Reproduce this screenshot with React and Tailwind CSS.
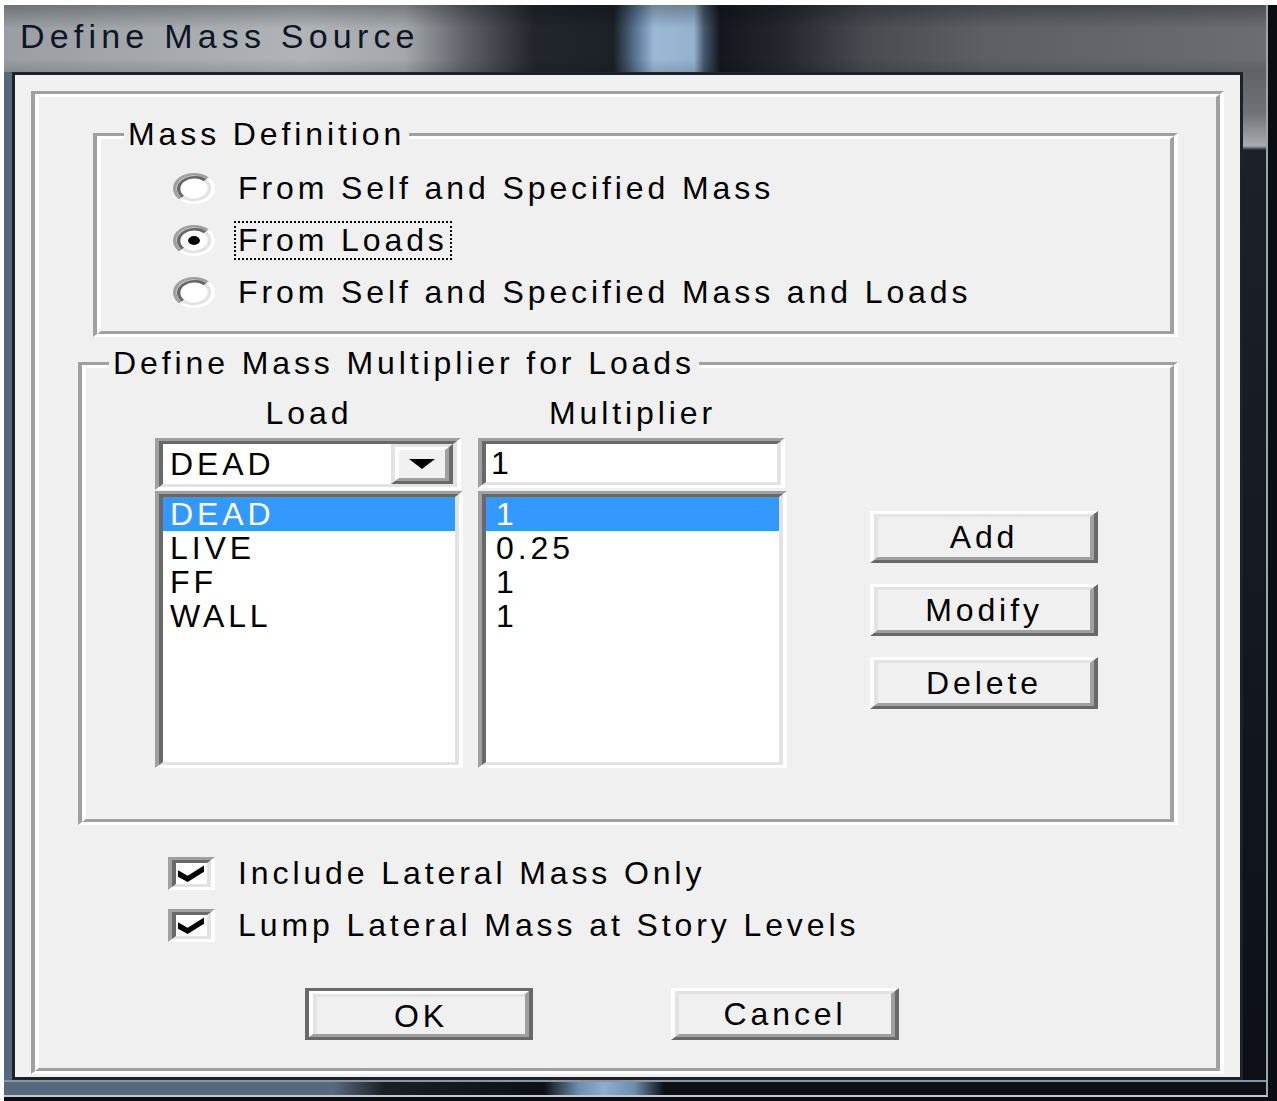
import React from "react"

// classic 3D edge styles
const sunkenOuter =
  "border-t-[3px] border-l-4 border-r-4 border-b-[3px] border-t-[#a0a0a0] border-l-[#a0a0a0] border-r-white border-b-white"
const sunkenInner =
  "border-t-[3px] border-l-4 border-r-4 border-b-[3px] border-t-[#696969] border-l-[#696969] border-r-[#e3e3e3] border-b-[#e3e3e3]"
const etchedOuter =
  "border-t-[3px] border-l-4 border-r-4 border-b-[3px] border-t-[#a0a0a0] border-l-[#a0a0a0] border-r-white border-b-white"
const etchedInner =
  "border-t-[3px] border-l-4 border-r-4 border-b-[3px] border-t-white border-l-white border-r-[#a0a0a0] border-b-[#a0a0a0]"

function Sunken({ className = "", inner = "", children }) {
  return (
    <div className={`${sunkenOuter} ${className}`}>
      <div className={`${sunkenInner} h-full bg-white ${inner}`}>{children}</div>
    </div>
  )
}

function Etched({ className = "", label, children }) {
  return (
    <div className={`${etchedOuter} relative ${className}`}>
      <div className={`${etchedInner} h-full`}>{children}</div>
      {label && (
        <span className="absolute -top-[19px] left-[27px] px-[4px] bg-[#f0f0f0] whitespace-nowrap">{label}</span>
      )}
    </div>
  )
}

function Button({ label, className = "" }) {
  return (
    <div className={`border-t-[3px] border-l-4 border-r-4 border-b-[3px] border-t-white border-l-white border-r-[#696969] border-b-[#696969] ${className}`}>
      <div className="h-full border-t-[3px] border-l-4 border-r-4 border-b-[3px] border-t-[#e3e3e3] border-l-[#e3e3e3] border-r-[#a0a0a0] border-b-[#a0a0a0] flex items-center justify-center">
        {label}
      </div>
    </div>
  )
}

function DefaultButton({ label, className = "" }) {
  return (
    <div className={`border-t-[3px] border-l-4 border-r-4 border-b-[3px] border-[#696969] ${className}`}>
      <div className="h-full border-t-[3px] border-l-4 border-r-4 border-b-[3px] border-t-white border-l-white border-r-[#a0a0a0] border-b-[#a0a0a0]">
        <div className="h-full border-t-[3px] border-l-4 border-t-[#e3e3e3] border-l-[#e3e3e3] flex items-center justify-center">
          {label}
        </div>
      </div>
    </div>
  )
}

function Radio({ checked }) {
  return (
    <svg width="42" height="31" viewBox="0 0 12 12" preserveAspectRatio="none" className="shrink-0">
      <circle cx="6" cy="6" r="4.5" fill="#fff" />
      <path d="M2.11 9.89 A5.5 5.5 0 0 1 9.89 2.11" fill="none" stroke="#a0a0a0" strokeWidth="1" />
      <path d="M2.82 9.18 A4.5 4.5 0 0 1 9.18 2.82" fill="none" stroke="#696969" strokeWidth="1" />
      <path d="M9.89 2.11 A5.5 5.5 0 0 1 2.11 9.89" fill="none" stroke="#ffffff" strokeWidth="1" />
      <path d="M9.18 2.82 A4.5 4.5 0 0 1 2.82 9.18" fill="none" stroke="#e3e3e3" strokeWidth="1" />
      {checked && <circle cx="6" cy="6" r="1.7" fill="#000" />}
    </svg>
  )
}

function Check() {
  return (
    <svg width="26" height="17" viewBox="0 0 7 7" preserveAspectRatio="none">
      <polygon points="0,2.2 2.6,4.4 7,0.2 7,2.8 2.6,7 0,4.8" fill="#000" />
    </svg>
  )
}

function RadioRow({ checked, focused, children }) {
  return (
    <div className="flex items-center h-[52px]">
      <Radio checked={checked} />
      <span
        className={`ml-[19px] px-[2px] leading-[35px] border-2 border-dotted whitespace-nowrap ${
          focused ? "border-black" : "border-transparent"
        }`}
      >
        {children}
      </span>
    </div>
  )
}

function CheckRow({ children }) {
  return (
    <div className="flex items-center h-[52px]">
      <Sunken className="w-[47px] h-[33px]" inner="flex items-center justify-center pr-[2px]">
        <Check />
      </Sunken>
      <span className="ml-[23px] whitespace-nowrap">{children}</span>
    </div>
  )
}

const loads = [
  { name: "DEAD", mult: "1" },
  { name: "LIVE", mult: "0.25" },
  { name: "FF", mult: "1" },
  { name: "WALL", mult: "1" },
]

export default function App() {
  return (
    <div className="w-[1277px] h-[1101px] overflow-hidden bg-[#0b0d12] border-t-[5px] border-l-4 border-t-white border-l-white font-['Liberation_Sans',Arial,sans-serif] text-[32px] leading-[34px] tracking-[3.9px] text-black">
      <div className="w-[1264px] h-[1092px] flex flex-col border-r-2 border-b-2 border-r-[#9ea3a8] border-b-[#c4c8cc]">
        {/* title bar */}
        <div className="h-[67px] shrink-0 pl-[16px] pt-[14px] bg-[linear-gradient(to_bottom,rgba(0,0,0,0.28),rgba(0,0,0,0)_35%,rgba(0,0,0,0)_80%,rgba(0,0,0,0.12)),linear-gradient(to_right,#9a9ea2_0px,#b0b4b8_300px,#a4a8ac_400px,#60646a_460px,#22262c_530px,#1c2128_610px,#5a7694_632px,#9cb8d4_650px,#94b2ce_690px,#46586c_700px,#14181e_716px,#24282e_780px,#474b50_860px,#5c6064_980px,#6a6e72_1262px)]">
          <span className="text-[34px] tracking-[5.2px] text-[#0e1626] whitespace-nowrap">Define Mass Source</span>
        </div>

        {/* frame + client */}
        <div className="flex flex-1">
          <div className="w-[8px] bg-[#56687c]" />
          <div className="w-[1231px] border-[3px] border-[#1d2229] bg-[#f0f0f0] pt-[16px] pl-[16px]">
            <Etched className="w-[1193px] h-[983px]">
              <div className="flex flex-col">
                {/* mass definition */}
                <Etched label="Mass Definition" className="ml-[54px] mt-[36px] w-[1085px] h-[204px]">
                  <div className="pl-[72px] pt-[23px]">
                    <RadioRow>From Self and Specified Mass</RadioRow>
                    <RadioRow checked focused>
                      From Loads
                    </RadioRow>
                    <RadioRow>From Self and Specified Mass and Loads</RadioRow>
                  </div>
                </Etched>

                {/* multipliers */}
                <Etched label="Define Mass Multiplier for Loads" className="ml-[39px] mt-[25px] w-[1100px] h-[463px]">
                  <div className="flex pl-[69px] pt-[28px]">
                    <div className="w-[308px] flex flex-col">
                      <div className="text-center">Load</div>
                      <Sunken className="mt-[8px] w-[306px] h-[52px]" inner="flex items-center">
                        <span className="pl-[7px] flex-1">DEAD</span>
                        <div className="w-[62px] h-full border-t-[3px] border-l-4 border-r-4 border-b-[3px] border-t-[#e3e3e3] border-l-[#e3e3e3] border-r-[#696969] border-b-[#696969]">
                          <div className="h-full border-t-[3px] border-l-4 border-r-4 border-b-[3px] border-t-white border-l-white border-r-[#a0a0a0] border-b-[#a0a0a0] bg-[#f0f0f0] flex items-center justify-center">
                            <svg width="26" height="10" viewBox="0 0 26 10">
                              <polygon points="0,0 26,0 13,10" fill="#000" />
                            </svg>
                          </div>
                        </div>
                      </Sunken>
                      <Sunken className="mt-[1px] w-[308px] h-[277px]">
                        {loads.map((l, i) => (
                          <div key={l.name} className={`pl-[7px] h-[34px] ${i === 0 ? "bg-[#3399ff] text-white" : ""}`}>
                            {l.name}
                          </div>
                        ))}
                      </Sunken>
                    </div>

                    <div className="ml-[15px] w-[309px] flex flex-col">
                      <div className="text-center">Multiplier</div>
                      <Sunken className="mt-[8px] w-[307px] h-[50px]" inner="flex items-center">
                        <span className="pl-[5px]">1</span>
                      </Sunken>
                      <Sunken className="mt-[3px] w-[309px] h-[277px]">
                        {loads.map((l, i) => (
                          <div key={l.name} className={`pl-[10px] h-[34px] ${i === 0 ? "bg-[#3399ff] text-white" : ""}`}>
                            {l.mult}
                          </div>
                        ))}
                      </Sunken>
                    </div>

                    <div className="ml-[83px] mt-[115px] flex flex-col gap-[21px]">
                      <Button label="Add" className="w-[228px] h-[52px]" />
                      <Button label="Modify" className="w-[228px] h-[52px]" />
                      <Button label="Delete" className="w-[228px] h-[52px]" />
                    </div>
                  </div>
                </Etched>

                <div className="ml-[129px] mt-[22px]">
                  <CheckRow>Include Lateral Mass Only</CheckRow>
                  <CheckRow>Lump Lateral Mass at Story Levels</CheckRow>
                </div>

                <div className="flex ml-[266px] mt-[37px]">
                  <DefaultButton label="OK" className="w-[228px] h-[52px]" />
                  <Button label="Cancel" className="ml-[138px] w-[228px] h-[52px]" />
                </div>
              </div>
            </Etched>
          </div>
          <div className="flex-1 bg-[linear-gradient(to_bottom,#5f6367_0px,#6e7276_40px,#a8acb0_74px,#1c2128_78px,#0c1016_100%)]" />
        </div>

        <div className="h-[15px] shrink-0 border-t-2 border-t-[#8a96a2] bg-[linear-gradient(to_right,#57697d_0px,#57697d_330px,#1a1f26_380px,#0c1016_540px,#6e8eae_575px,#8eaecf_600px,#6e8eae_630px,#0c1016_660px,#0c1016_100%)]" />
      </div>
    </div>
  )
}
